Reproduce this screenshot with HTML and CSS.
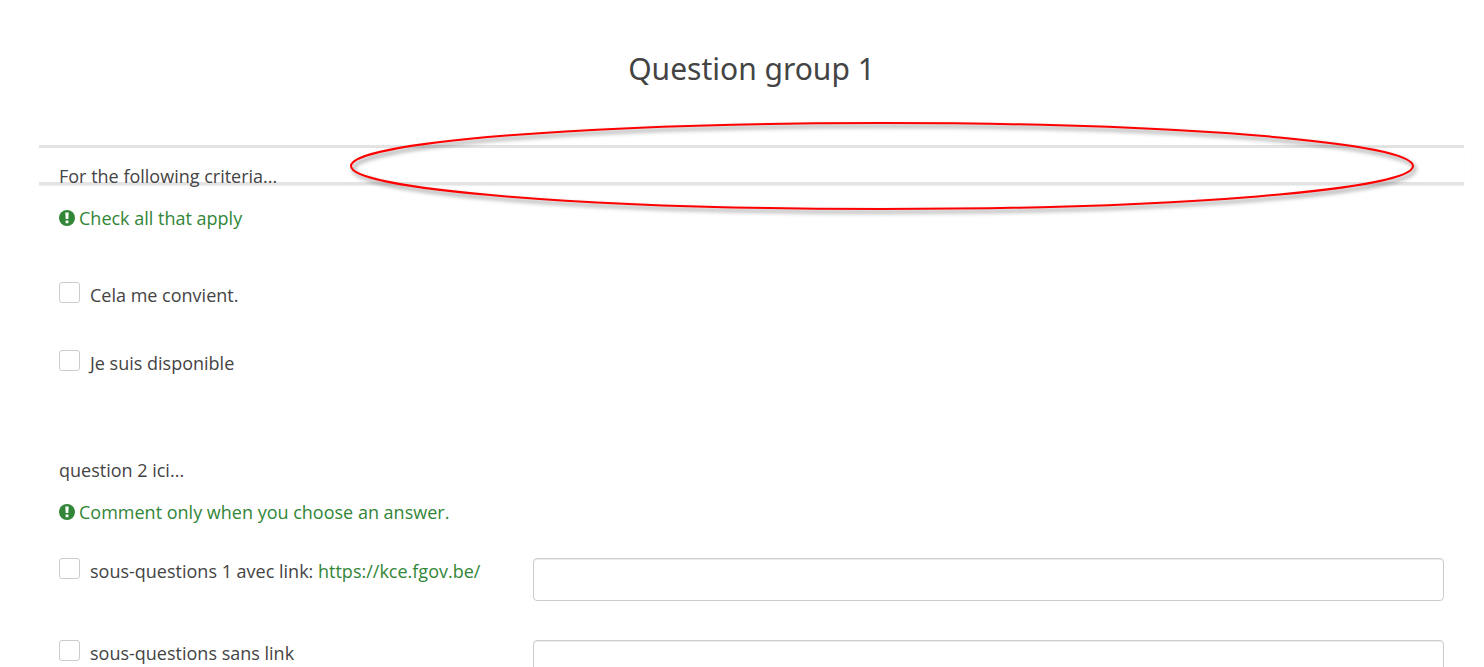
FILE: index.html
```html
<!DOCTYPE html>
<html lang="fr">
<head>
<meta charset="utf-8">
<meta name="viewport" content="width=device-width, initial-scale=1">
<title>Question group 1</title>
<link rel="stylesheet" href="styles.css">
</head>
<body>
<main class="survey">
  <h1 class="group-title">Question group 1</h1>

  <section class="question question-first">
    <div class="question-banner">
      <p class="question-text">For the following criteria...</p>
      <svg class="annotation" viewBox="0 0 1064 88" preserveAspectRatio="none" aria-hidden="true">
        <ellipse cx="532" cy="44" rx="531" ry="43"/>
      </svg>
    </div>
    <p class="help">
      <svg class="help-icon" viewBox="0 0 16 16" aria-hidden="true"><circle cx="8" cy="8" r="8" fill="#328637"/><path d="M6.3 2.6h3.4l-.4 6.4H6.7zM6.6 10.4h2.8v2.8H6.6z" fill="#fff"/></svg>
      <span>Check all that apply</span>
    </p>
    <div class="answers">
      <div class="choice"><input class="check" type="checkbox" id="a1"><label for="a1">Cela me convient.</label></div>
      <div class="choice"><input class="check" type="checkbox" id="a2"><label for="a2">Je suis disponible</label></div>
    </div>
  </section>

  <section class="question">
    <p class="question-text">question 2 ici...</p>
    <p class="help">
      <svg class="help-icon" viewBox="0 0 16 16" aria-hidden="true"><circle cx="8" cy="8" r="8" fill="#328637"/><path d="M6.3 2.6h3.4l-.4 6.4H6.7zM6.6 10.4h2.8v2.8H6.6z" fill="#fff"/></svg>
      <span>Comment only when you choose an answer.</span>
    </p>
    <div class="comment-rows">
      <div class="comment-row">
        <div class="choice"><input class="check" type="checkbox" id="b1"><label for="b1">sous-questions 1 avec link: <a class="link" href="https://kce.fgov.be/">https://kce.fgov.be/</a></label></div>
        <input class="comment" type="text" aria-label="Comment 1">
      </div>
      <div class="comment-row">
        <div class="choice"><input class="check" type="checkbox" id="b2"><label for="b2">sous-questions sans link</label></div>
        <input class="comment" type="text" aria-label="Comment 2">
      </div>
    </div>
  </section>
</main>
</body>
</html>
```
FILE: styles.css
```css
* {
  box-sizing: border-box;
}

html {
  overflow: hidden;
}

body {
  margin: 0;
  background: #fff;
  color: #444;
  font: 18px/26px "Open Sans", "Noto Sans", sans-serif;
}

h1,
p {
  margin: 0;
}

.survey {
  padding: 48px 20px 0 39px;
}

.group-title {
  margin-bottom: 55px;
  font-family: "Noto Sans", "Open Sans", sans-serif;
  font-size: 30px;
  font-weight: 400;
  line-height: 42px;
  text-align: center;
}

.question {
  padding: 0 20px;
}

.question-first {
  margin-bottom: 81px;
}

.question-banner {
  position: relative;
  height: 40px;
  margin: 0 -20px 20px;
  padding: 15px 20px 0;
  border: solid #e3e3e3;
  border-width: 3px 0;
  box-shadow: 0 1px 1px rgba(0, 0, 0, 0.06);
}

.annotation {
  position: absolute;
  top: -26px;
  left: 311px;
  width: calc(100% - 361px);
  height: 88px;
  overflow: visible;
  fill: none;
  stroke: #f00;
  stroke-width: 2px;
  filter: drop-shadow(2px 3px 2px rgba(0, 0, 0, 0.5));
  pointer-events: none;
}

.help {
  display: flex;
  align-items: center;
  gap: 4px;
  color: #328637;
}

.help-icon {
  width: 16px;
  height: 16px;
  flex: none;
}

.answers {
  display: grid;
  gap: 42px;
  margin-top: 51px;
}

.choice {
  display: flex;
  align-items: flex-start;
  gap: 10px;
}

.check {
  appearance: none;
  flex: none;
  width: 21px;
  height: 21px;
  margin: 0;
  border: 1px solid #ccc;
  border-radius: 3px;
  background: #fff;
}

.question-text + .help {
  margin-top: 16px;
}

.comment-rows {
  display: grid;
  gap: 39px;
  margin-top: 33px;
}

.comment-row {
  display: grid;
  grid-template-columns: 1fr 2fr;
  column-gap: 18px;
}

.comment {
  width: 100%;
  height: 43px;
  padding: 6px 12px;
  border: 1px solid #ccc;
  border-radius: 4px;
  background: #fff;
  box-shadow: inset 0 1px 1px rgba(0, 0, 0, 0.075);
  color: inherit;
  font: inherit;
}

.link {
  color: #328637;
  text-decoration: none;
}
```
